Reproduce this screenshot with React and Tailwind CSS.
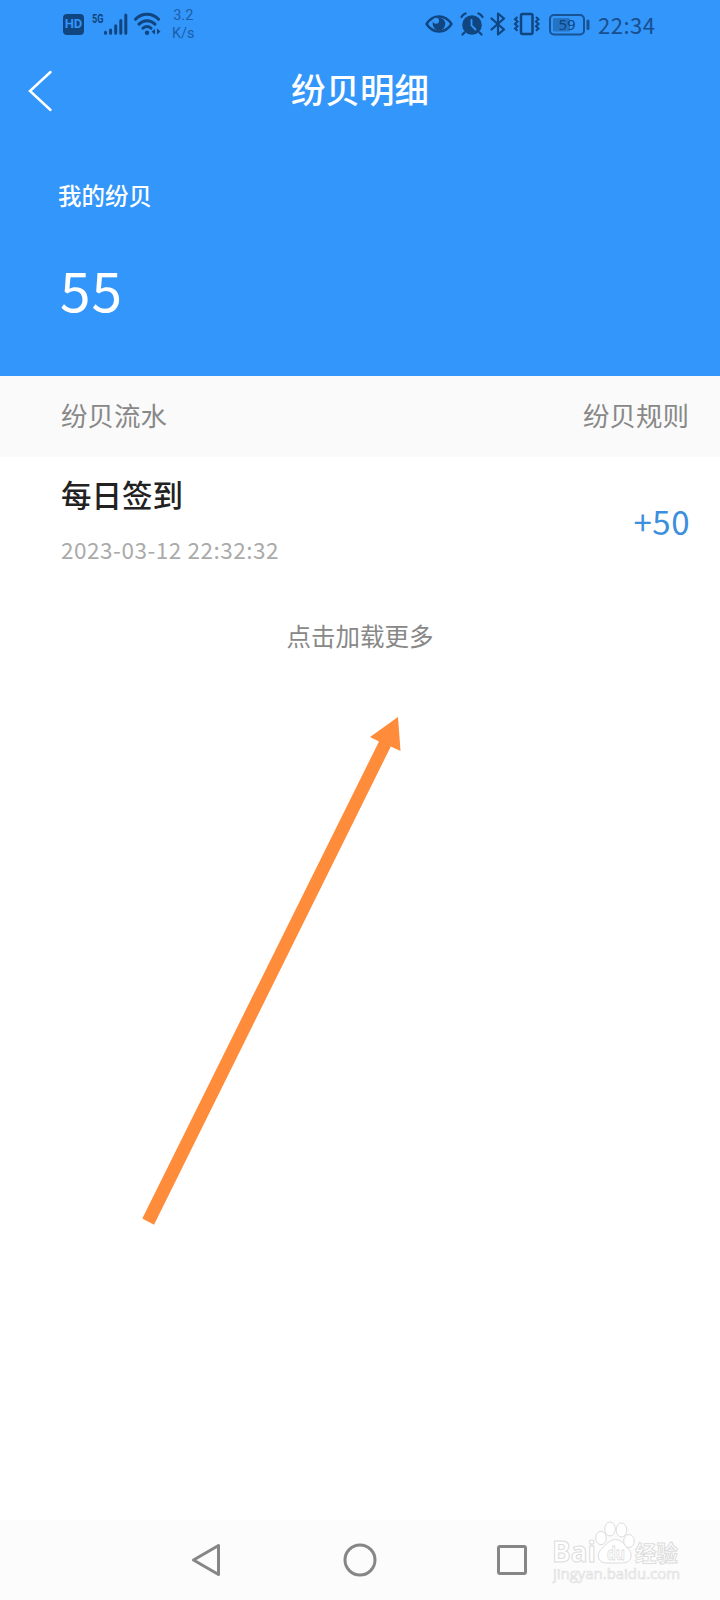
const RECORDS = [
  { id: 1, title: '每日签到', time: '2023-03-12 22:32:32', amount: '+50' },
];

// ─── Status Bar ───────────────────────────────────────────────────────────────
function SignalIcons() {
  return (
    <div className="flex h-6 items-center">
      <div className="flex h-[21px] w-[21px] items-center justify-center rounded-[4px] bg-[#10457f] font-['Roboto',sans-serif] text-[13px] leading-4 font-bold text-[#3396fb]">
        HD
      </div>
      <svg className="ml-2 h-6 w-[36px] overflow-visible font-['Roboto',sans-serif]" viewBox="0 0 36 24" fill="none">
        <text x="0" y="10.500" fontSize="13.500" fontWeight="700" fill="#10457f" textLength="11.500" lengthAdjust="spacingAndGlyphs">5G</text>
        <g stroke="#10457f" strokeWidth="3" strokeLinecap="round">
          <path d="M13.5 20.3v1M18.6 18v3.3M23.7 13.8v7.5M28.8 8.5v12.8M33.8 3v18.3" />
        </g>
      </svg>
      <svg className="ml-1.5 h-6 w-[28px]" viewBox="0 0 28 24" fill="none">
        <g stroke="#10457f" strokeWidth="3" strokeLinecap="round">
          <path d="M1.5 7.3C8 .7 18 .7 24.5 7.3" />
          <path d="M5 12.2c4.7-4.5 11.300-4.500 16 0" />
          <path d="M9 16.2c2.400-2 5.600-2 8 0" />
        </g>
        <circle cx="13" cy="20.800" r="2.200" fill="#10457f" />
        <path d="M21 17v5.500l-3.500-2.700zM23 16.500v6l3.500-3z" fill="#10457f" />
      </svg>
      <div className="ml-[10px] pt-px text-center font-['Roboto',sans-serif] text-[14.5px] leading-[18px] text-[#1c5ea7]">
        <div>3.2</div>
        <div>K/s</div>
      </div>
    </div>
  );
}

function SystemIcons() {
  return (
    <div className="flex h-6 items-center">
      <svg className="h-6 w-[28px]" viewBox="0 0 28 24" fill="none">
        <path d="M1.500 12C8 2 20 2 26.500 12 20 22 8 22 1.500 12z" stroke="#10457f" strokeWidth="2.400" strokeLinejoin="round" />
        <circle cx="14" cy="12" r="6.300" fill="#10457f" />
        <circle cx="11" cy="8.800" r="3" fill="#3396fb" />
      </svg>
      <svg className="ml-[7px] h-6 w-6" viewBox="0 0 24 24" fill="none">
        <circle cx="12" cy="13" r="9.800" fill="#10457f" />
        <path d="M1.500 5C2.500 3.200 3.500 2.300 5.500 1.500M22.500 5c-1-1.800-2-2.700-4-3.500M4.500 20.500l-2 2M19.500 20.500l2 2" stroke="#10457f" strokeWidth="2.200" strokeLinecap="round" />
        <path d="M11.500 8v5.500l4 4" stroke="#3396fb" strokeWidth="1.800" strokeLinecap="round" />
      </svg>
      <svg className="ml-[6px] h-6 w-4" viewBox="0 0 16 24" fill="none">
        <path d="M1.500 6.500l12.500 11-6 5V1.500l6 5L1.500 17.500" stroke="#10457f" strokeWidth="2.200" strokeLinejoin="round" strokeLinecap="round" />
      </svg>
      <svg className="ml-[7px] h-6 w-[28px]" viewBox="0 0 28 24" fill="none">
        <rect x="8" y="2" width="11.500" height="20" rx="1.500" stroke="#10457f" strokeWidth="2.500" />
        <path d="M4.500 5l-2.500 2.300 2.500 2.300-2.500 2.300 2.500 2.300-2.500 2.300 2.500 2.300M23 5l2.500 2.300-2.500 2.300 2.500 2.300-2.500 2.300 2.500 2.300-2.500 2.300" stroke="#10457f" strokeWidth="2" />
      </svg>
      <svg className="ml-[8px] h-6 w-[42px] font-['Noto_Sans',sans-serif]" viewBox="0 0 42 24" fill="none">
        <rect x="1" y="3" width="34" height="19.500" rx="4" stroke="#185396" strokeWidth="2" />
        <rect x="4" y="6" width="17" height="13.500" rx="1.500" fill="#2473c5" />
        <path d="M39 9v7.500" stroke="#185396" strokeWidth="3" strokeLinecap="round" />
        <text x="18" y="18" fontSize="15" textAnchor="middle" fill="#10457f">59</text>
      </svg>
      <span className="ml-[7px] w-[58px] text-[22px] leading-6 tracking-[0.5px] text-[#174f8e]">22:34</span>
    </div>
  );
}

function StatusBar() {
  return (
    <div className="flex h-12 items-center justify-between pr-[64px] pl-[63px]">
      <SignalIcons />
      <SystemIcons />
    </div>
  );
}

// ─── Record Row ───────────────────────────────────────────────────────────────
function RecordRow({ record }) {
  return (
    <div className="flex h-[130px] items-start justify-between pr-[30px] pl-[61px]">
      <div>
        <div className="mt-[15px] text-[30.500px] leading-[44px] font-medium text-[#222]">{record.title}</div>
        <div className="mt-[19px] text-[22.500px] leading-7 tracking-[0.53px] text-[#aaa]">{record.time}</div>
      </div>
      <div className="mt-[39px] text-[33px] leading-[50px] tracking-[0.5px] text-[#3c8fdc]">{record.amount}</div>
    </div>
  );
}

// ─── Pointer Arrow ────────────────────────────────────────────────────────────
function PointerArrow() {
  return (
    <svg className="pointer-events-none absolute top-[710px] left-[135px] h-[520px] w-[275px]" viewBox="135 710 275 520">
      <path d="M398 717l2.500 34-9.700-4.500L154 1224.700l-11.700-6.200L379 741.500l-9-4.500z" fill="#fe8c3a" />
    </svg>
  );
}

// ─── Watermark ────────────────────────────────────────────────────────────────
function Watermark() {
  return (
    <svg className="pointer-events-none absolute top-[1518px] left-[550px] h-[70px] w-[136px] font-['Open_Sans','Noto_Sans_CJK_SC',sans-serif]" viewBox="0 0 136 70" fill="#fff" stroke="#dcdcdc" strokeWidth="1">
      <text x="2" y="43.500" fontSize="28" fontWeight="700" textLength="44" lengthAdjust="spacingAndGlyphs">Bai</text>
      <ellipse cx="51" cy="20" rx="5.300" ry="6.700" />
      <ellipse cx="60" cy="11" rx="5.300" ry="7" />
      <ellipse cx="71.500" cy="12" rx="5.300" ry="7" />
      <ellipse cx="79" cy="23" rx="5.300" ry="6.500" />
      <path d="M65.500 21.500c6 0 8.500 5 11.500 8 4 4 5 7 3.500 11-2 5-8 4.500-15 4.500S51 46 49 41c-1.500-4-.500-7 3.500-11 3-3 7-8.500 13-8.500z" />
      <text x="57" y="41.500" fontSize="17" fontWeight="700" strokeWidth="0.800" textLength="18" lengthAdjust="spacingAndGlyphs">du</text>
      <text x="85" y="43" fontSize="22" fontWeight="700" textLength="43" lengthAdjust="spacingAndGlyphs">经验</text>
      <text x="3" y="61" fontSize="14" strokeWidth="0.600" textLength="127" lengthAdjust="spacingAndGlyphs">jingyan.baidu.com</text>
    </svg>
  );
}

// ─── Navigation Bar ───────────────────────────────────────────────────────────
function NavBar() {
  return (
    <div className="flex h-20 items-center justify-center gap-[116px] bg-[#fcfcfc]">
      <svg className="h-9 w-9" viewBox="0 0 36 36" fill="none" stroke="#868686" strokeWidth="3" strokeLinejoin="round">
        <path d="M3.500 18L28.500 3.500v29z" />
      </svg>
      <svg className="h-9 w-9" viewBox="0 0 36 36" fill="none" stroke="#868686" strokeWidth="3">
        <circle cx="18" cy="18" r="15" />
      </svg>
      <svg className="h-9 w-9" viewBox="0 0 36 36" fill="none" stroke="#868686" strokeWidth="3">
        <rect x="4.500" y="4.500" width="27" height="27" rx="1.500" />
      </svg>
    </div>
  );
}

// ─── Main Component ───────────────────────────────────────────────────────────
export default function App() {
  return (
    <div className="relative flex h-[1600px] w-[720px] flex-col overflow-hidden bg-white font-['Noto_Sans_CJK_SC',sans-serif]">
      <header className="h-[376px] bg-[#3396fb] text-white">
        <StatusBar />
        <div className="grid h-[86px] grid-cols-[80px_1fr_80px] items-center">
          <svg className="ml-[27px] h-[42px] w-[28px]" viewBox="0 0 28 42" fill="none" stroke="#fff" strokeWidth="2.500" strokeLinecap="round">
            <path d="M23.500 2L3 21l20.500 19" />
          </svg>
          <h1 className="pb-1 text-center text-[34.500px] font-medium">纷贝明细</h1>
        </div>
        <div className="pt-[43px] pl-[58px]">
          <div className="text-[23.500px] leading-9 font-medium">我的纷贝</div>
          <div className="mt-[35px] pl-0.5 text-[55px] leading-[80px] tracking-[1px]">55</div>
        </div>
      </header>

      <div className="flex h-[81px] items-center justify-between bg-[#fafafa] pr-[31px] pb-1 pl-[61px] text-[26.500px] text-[#888]">
        <span>纷贝流水</span>
        <span>纷贝规则</span>
      </div>

      <main className="flex-1">
        {RECORDS.map((record) => (
          <RecordRow key={record.id} record={record} />
        ))}
        <div className="mt-[29px] text-center text-[24.500px] leading-10 text-[#888]">点击加载更多</div>
      </main>

      <NavBar />
      <PointerArrow />
      <Watermark />
    </div>
  );
}
